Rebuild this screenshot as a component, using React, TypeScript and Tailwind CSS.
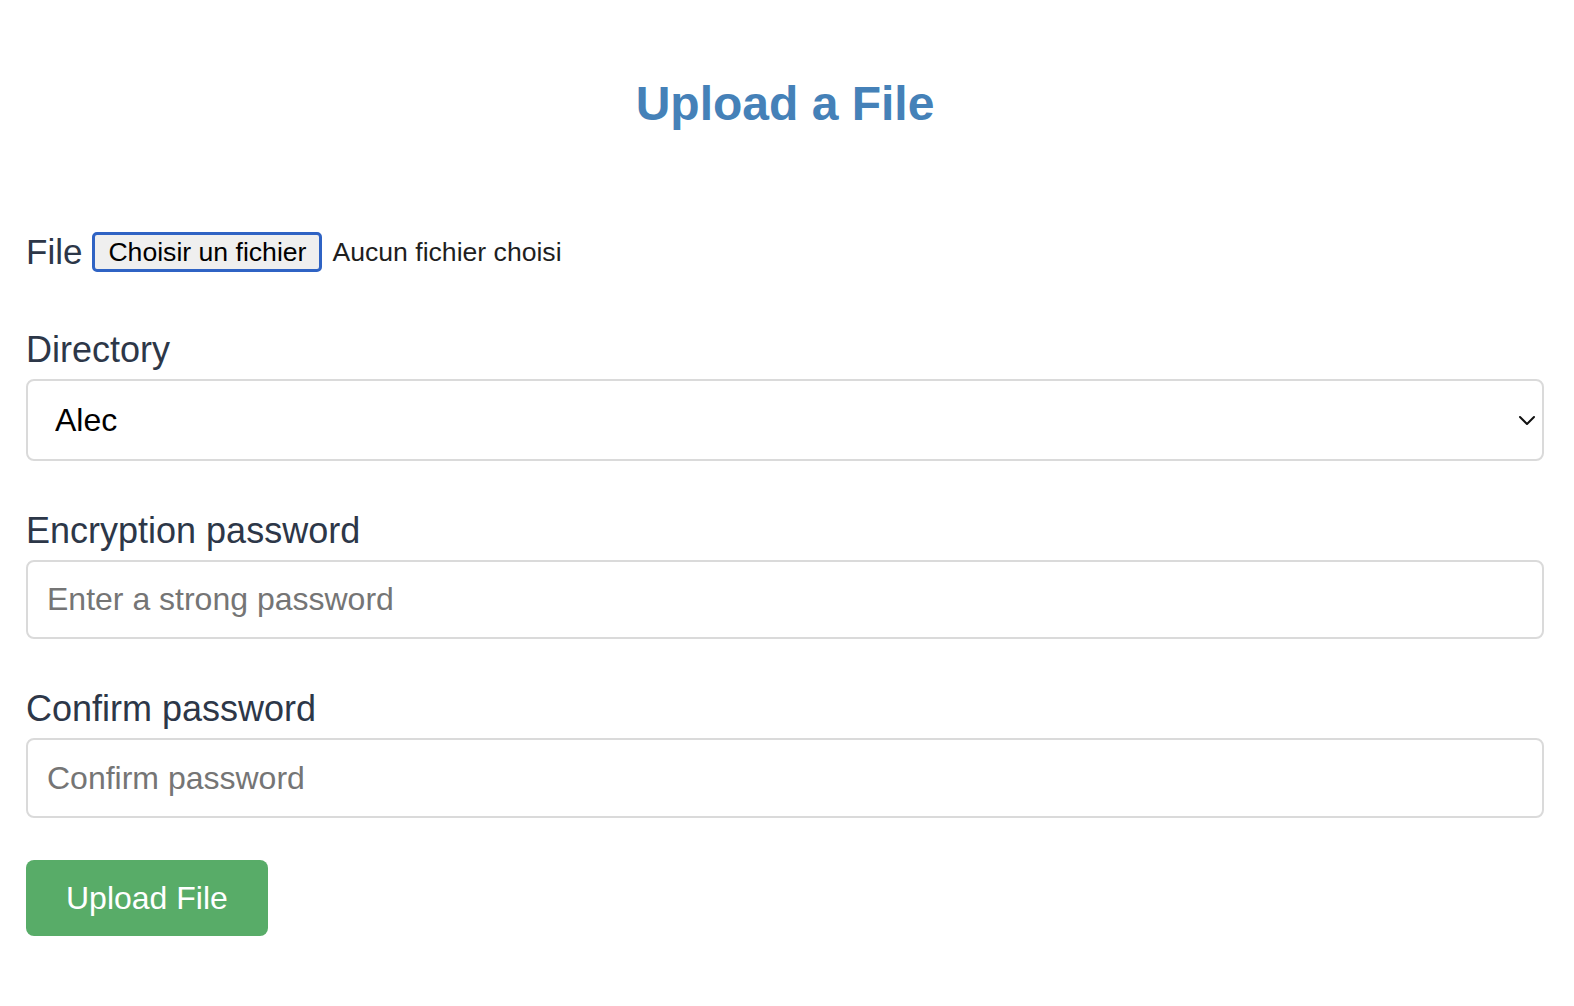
import { useState } from 'react';

const directories = ['Alec', 'Shared', 'Archive'];

export default function App() {
  const [directory, setDirectory] = useState('Alec');
  const [password, setPassword] = useState('');
  const [confirm, setConfirm] = useState('');
  const [fileName, setFileName] = useState('');

  return (
    <div className="min-h-screen bg-white font-['Liberation_Sans',Arial,sans-serif]">
      <div className="pl-[26px] pr-[30px]">
        <h1 className="pt-[76px] text-center text-[48px] font-bold leading-[56px] text-[#4581b8]">
          Upload a File
        </h1>

        <form onSubmit={(e) => e.preventDefault()} className="mt-[100px]">
          {/* fichier */}
          <div className="flex items-center">
            <span className="text-[35px] leading-[40px] text-[#2d3748]">File</span>
            <label className="ml-[10px] flex cursor-pointer items-center">
              <span className="rounded-[5px] border-[3px] border-[#2f63c4] bg-[#efefef] px-[13px] text-[26.6px] leading-[34px] text-black">
                Choisir un fichier
              </span>
              <span className="ml-[10px] text-[26.6px] leading-[34px] text-[#1f1f1f]">
                {fileName || 'Aucun fichier choisi'}
              </span>
              <input
                type="file"
                className="hidden"
                onChange={(e) => setFileName(e.target.files?.[0]?.name ?? '')}
              />
            </label>
          </div>

          <div className="mt-[57px]">
            <label className="block text-[36px] leading-[42px] text-[#2d3748]">Directory</label>
            <div className="relative mt-[8px]">
              <select
                value={directory}
                onChange={(e) => setDirectory(e.target.value)}
                className="h-[82px] w-full appearance-none rounded-[8px] border-2 border-[#dadada] bg-white pl-[27px] text-[32px] text-black outline-none"
              >
                {directories.map((d) => (
                  <option key={d} value={d}>
                    {d}
                  </option>
                ))}
              </select>
              <svg
                className="pointer-events-none absolute right-[8px] top-1/2 -translate-y-1/2"
                width="18"
                height="12"
                viewBox="0 0 18 12"
                fill="none"
              >
                <path d="M2 3l7 7 7-7" stroke="#111" strokeWidth="2" strokeLinecap="round" strokeLinejoin="round" />
              </svg>
            </div>
          </div>

          <div className="mt-[49px]">
            <label className="block text-[36px] leading-[42px] text-[#2d3748]">Encryption password</label>
            <input
              type="password"
              value={password}
              onChange={(e) => setPassword(e.target.value)}
              placeholder="Enter a strong password"
              className="mt-[8px] h-[79px] w-full rounded-[8px] border-2 border-[#dadada] px-[19px] text-[32px] text-black outline-none placeholder:text-[#757575]"
            />
          </div>

          <div className="mt-[49px]">
            <label className="block text-[36px] leading-[42px] text-[#2d3748]">Confirm password</label>
            <input
              type="password"
              value={confirm}
              onChange={(e) => setConfirm(e.target.value)}
              placeholder="Confirm password"
              className="mt-[8px] h-[80px] w-full rounded-[8px] border-2 border-[#dadada] px-[19px] text-[32px] text-black outline-none placeholder:text-[#757575]"
            />
          </div>

          <button
            type="submit"
            className="mt-[42px] h-[76px] rounded-[8px] bg-[#58ac68] px-[40px] text-[32px] text-white hover:bg-[#4e9c5d]"
          >
            Upload File
          </button>
        </form>
      </div>
    </div>
  );
}
